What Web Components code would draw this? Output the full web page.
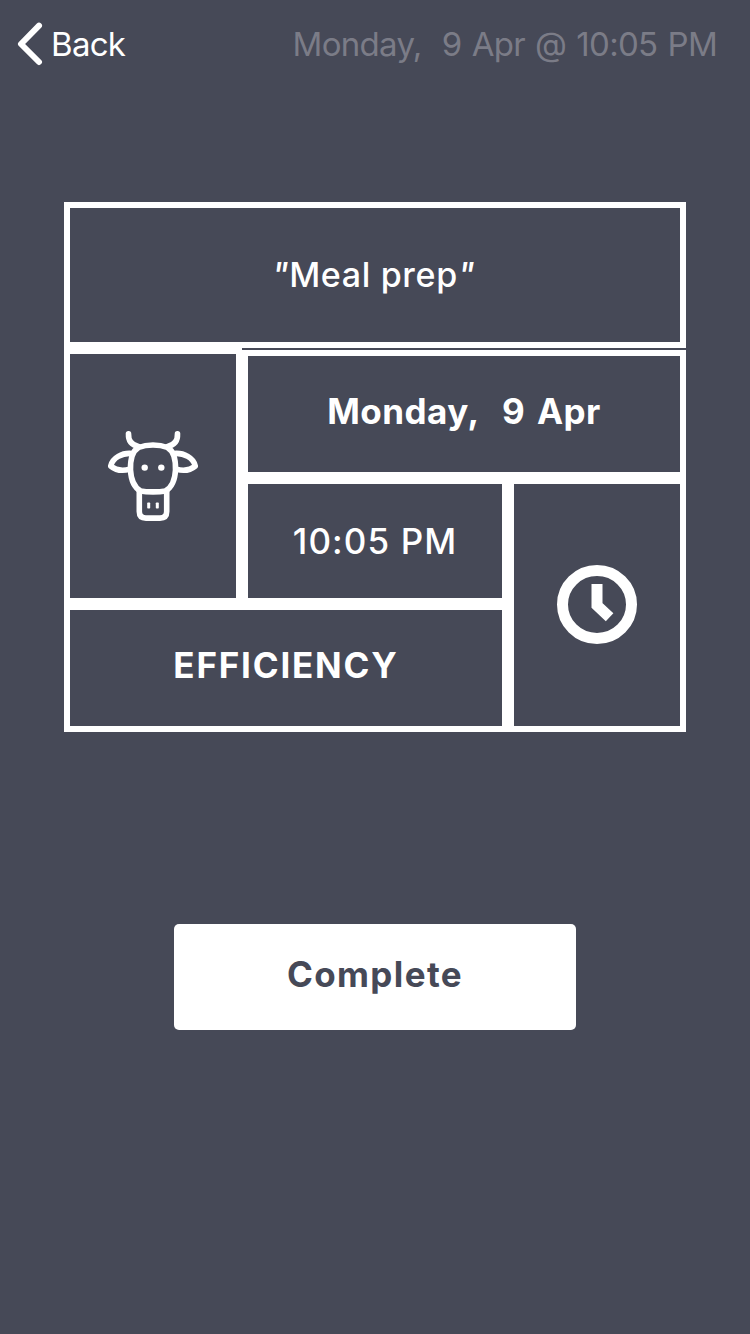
<!DOCTYPE html>
<html lang="en">
<head>
<meta charset="utf-8">
<title>Meal prep</title>
<style>
html, body { margin: 0; height: 100%; background: #464957; }
</style>
</head>
<body>
<task-screen></task-screen>
<script>
const define = (name, html) => {
  const template = document.createElement('template');
  template.innerHTML = html;
  customElements.define(name, class extends HTMLElement {
    constructor() {
      super();
      this.attachShadow({ mode: 'open' }).append(template.content.cloneNode(true));
    }
  });
};

define('back-button', `
<style>
:host { display: flex; align-items: center; gap: 8px; color: #fff; font-size: 33px; line-height: 44px; letter-spacing: -.7px; }
svg { display: block; }
</style>
<svg width="26" height="44" viewBox="0 0 26 44" fill="none" stroke="#fff" stroke-width="6" stroke-linecap="round" stroke-linejoin="round"><path d="M22 3.700 4 22 22 40"/></svg>
<span><slot></slot></span>`);

define('nav-bar', `
<style>
:host { display: flex; justify-content: space-between; align-items: center; height: 88px; padding: 0 33px 0 17px; box-sizing: border-box; font-family: Inter, "Liberation Sans", sans-serif; }
.title { color: #7b7c87; font-size: 33px; line-height: 44px; letter-spacing: -.7px; word-spacing: 1.5px; white-space: pre; }
</style>
<slot name="back"></slot><span class="title"><slot></slot></span>`);

define('ticket-cell', `
<style>
:host { display: flex; align-items: center; justify-content: center; box-sizing: border-box; border: 6px solid #fff; min-width: 0; white-space: pre; color: #fff; }
</style>
<slot></slot>`);

define('cow-icon', `
<style>:host, svg { display: block; } :host { white-space: normal; }</style>
<svg width="92" height="92" viewBox="0 0 92 92" fill="none" stroke="#fff" stroke-width="5.6" stroke-linecap="round" stroke-linejoin="round">
<path d="M21.500 3.700C21.200 10.500 24.500 15.200 31.500 16.500M70.500 3.700C70.800 10.500 67.500 15.200 60.500 16.500"/>
<path d="M31.500 17.500C40 14.200 52 14.200 60.500 17.500C67.500 21.500 68.800 30 68.500 40C68 50 64.500 57.500 58.500 61C52 62.200 40 62.200 33.500 61C27.500 57.500 24 50 23.500 40C23.200 30 24.500 21.500 31.500 17.500Z"/>
<path d="M25 23.500C15 22.500 5.500 28 3.700 36C9 40.500 16 41 22.500 39.300M67 23.500C77 22.500 86.500 28 88.300 36C83 40.500 76 41 69.500 39.300"/>
<path d="M32.300 61V81.500C32.300 86 34.500 88.100 39 88.100H53C57.500 88.100 59.700 86 59.700 81.500V61"/>
<g fill="#fff" stroke="none"><circle cx="37.700" cy="37.600" r="3.200"/><circle cx="54.300" cy="37.600" r="3.200"/><rect x="40.200" y="72.500" width="3" height="6" rx=".8"/><rect x="48.800" y="72.500" width="3" height="6" rx=".8"/></g>
</svg>`);

define('clock-icon', `
<style>:host, svg { display: block; } :host { white-space: normal; }</style>
<svg width="80" height="80" viewBox="0 0 80 80" fill="none" stroke="#fff" stroke-width="11">
<ellipse cx="40" cy="39.500" rx="34.500" ry="34"/><path d="M40 19V40.400L52.600 52.300"/>
</svg>`);

define('task-ticket', `
<style>
:host { display: grid; width: 622px; grid-template-columns: 178px 266px 178px; grid-template-rows: 146px 2px 128px 126px 128px; font-family: Inter, "Liberation Sans", sans-serif; font-size: 35px; line-height: 44px; font-weight: 500; }
.name { grid-area: 1 / 1 / 2 / 4; font-size: 34px; padding-right: 3px; }
.animal { grid-area: 2 / 1 / 5 / 2; }
.date { grid-area: 3 / 2 / 4 / 4; padding-bottom: 6px; font-weight: 700; }
.time { grid-area: 4 / 2 / 5 / 3; }
.clock { grid-area: 4 / 3 / 6 / 4; }
.kind { grid-area: 5 / 1 / 6 / 3; padding-bottom: 6px; font-weight: 700; }
.name span { letter-spacing: .65px; }
.date span { letter-spacing: .5px; word-spacing: 2.9px; }
.time span { letter-spacing: 1.1px; }
.kind span { letter-spacing: 1.8px; }
</style>
<ticket-cell class="name"><span><slot name="name"></slot></span></ticket-cell>
<ticket-cell class="animal"><cow-icon></cow-icon></ticket-cell>
<ticket-cell class="date"><span><slot name="date"></slot></span></ticket-cell>
<ticket-cell class="time"><span><slot name="time"></slot></span></ticket-cell>
<ticket-cell class="clock"><clock-icon></clock-icon></ticket-cell>
<ticket-cell class="kind"><span><slot name="kind"></slot></span></ticket-cell>`);

define('solid-button', `
<style>
:host { display: block; }
button { display: flex; width: 402px; height: 106px; align-items: center; justify-content: center; border: 0; border-radius: 5px; padding: 0 0 6px; background: #fff; color: #464957; font: 700 35px/44px Inter, "Liberation Sans", sans-serif; letter-spacing: 1.4px; }
</style>
<button><slot></slot></button>`);

define('task-screen', `
<style>
:host { display: flex; flex-direction: column; width: 750px; height: 1334px; background: #464957; }
nav-bar { flex: none; }
main { display: flex; flex-direction: column; align-items: center; gap: 192px; padding-top: 114px; }
i { font-style: italic; }
</style>
<nav-bar><back-button slot="back">Back</back-button>Monday,  9 Apr @ 10:05 PM</nav-bar>
<main>
<task-ticket><span slot="name"><i>"</i>Meal prep<i>"</i></span><span slot="date">Monday,  9 Apr</span><span slot="time">10:05 PM</span><span slot="kind">EFFICIENCY</span></task-ticket>
<solid-button>Complete</solid-button>
</main>`);
</script>
</body>
</html>
